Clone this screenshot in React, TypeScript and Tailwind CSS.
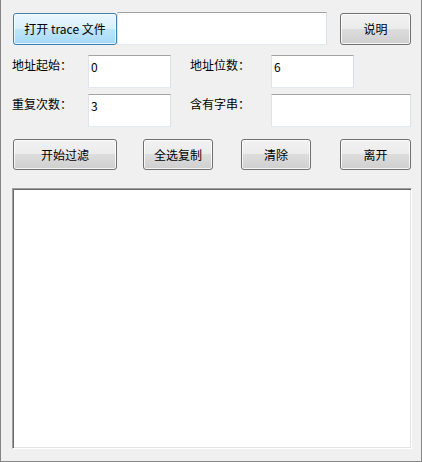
import React from "react";

const font = { fontFamily: '"Noto Sans CJK SC", "Noto Sans", sans-serif' };

function WinButton({ label, width, hot = false, className = "" }: { label: string; width: string; hot?: boolean; className?: string }) {
    const skin = hot
        ? "border-[#3c7fb1] bg-[linear-gradient(#eaf6fd_0%,#d9f0fc_50%,#bee6fd_50%,#a7d9f5_100%)] shadow-[inset_0_0_0_1px_rgba(255,255,255,0.7)]"
        : "border-[#707070] bg-[linear-gradient(#f2f2f2_0%,#ebebeb_50%,#dddddd_50%,#cfcfcf_100%)] shadow-[inset_0_0_0_1px_rgba(255,255,255,0.8)]";
    return (
        <button className={`${width} ${skin} ${className} shrink-0 border rounded-[3px] text-[12px] leading-[16px] text-black flex items-center justify-center`}>
            {label}
        </button>
    );
}

function TextBox({ value = "", width, className = "" }: { value?: string; width: string; className?: string }) {
    return (
        <div className={`${width} ${className} shrink-0 h-[33px] bg-white border border-t-[#a3a3a3] border-l-[#e2e3ea] border-r-[#dbdfe6] border-b-[#e3e9ef] px-[2px] pt-[3px] text-[12px] leading-[16px] text-black`}>
            {value}
        </div>
    );
}

export default function App() {
    return (
        <div style={font} className="w-[422px] h-[462px] bg-[#f0f0f0] border-x border-b border-[#858585] overflow-hidden">
            {/* file row */}
            <div className="flex items-start pt-[12px] pl-[12px]">
                <WinButton label="打开 trace 文件" width="w-[104px] h-[32px]" hot className="mt-[1px]" />
                <TextBox width="w-[210px]" className="ml-0" />
                <WinButton label="说明" width="w-[71px] h-[32px]" className="mt-[1px] ml-[13px]" />
            </div>

            {/* params */}
            <div className="flex flex-col gap-[6px] mt-[10px] pl-[11px]">
                <div className="flex items-start">
                    <span className="w-[76px] pt-[2px] text-[12px] leading-[16px]">地址起始：</span>
                    <TextBox value="0" width="w-[83px]" />
                    <span className="w-[81px] ml-[19px] pt-[2px] text-[12px] leading-[16px]">地址位数：</span>
                    <TextBox value="6" width="w-[83px]" />
                </div>
                <div className="flex items-start">
                    <span className="w-[76px] pt-[2px] text-[12px] leading-[16px]">重复次数：</span>
                    <TextBox value="3" width="w-[83px]" />
                    <span className="w-[81px] ml-[19px] pt-[2px] text-[12px] leading-[16px]">含有字串：</span>
                    <TextBox width="w-[140px]" />
                </div>
            </div>

            {/* actions */}
            <div className="flex items-start mt-[12px] pl-[12px]">
                <WinButton label="开始过滤" width="w-[104px] h-[31px]" />
                <WinButton label="全选复制" width="w-[70px] h-[31px]" className="ml-[26px]" />
                <WinButton label="清除" width="w-[70px] h-[31px]" className="ml-[28px]" />
                <WinButton label="离开" width="w-[71px] h-[31px]" className="ml-[29px]" />
            </div>

            {/* output */}
            <div className="ml-[11px] mt-[18px] w-[400px] h-[261px] bg-white border border-t-[#a0a0a0] border-l-[#a0a0a0] border-r-white border-b-white shadow-[inset_1px_1px_0_#696969,inset_-1px_-1px_0_#e3e3e3]" />
        </div>
    );
}
